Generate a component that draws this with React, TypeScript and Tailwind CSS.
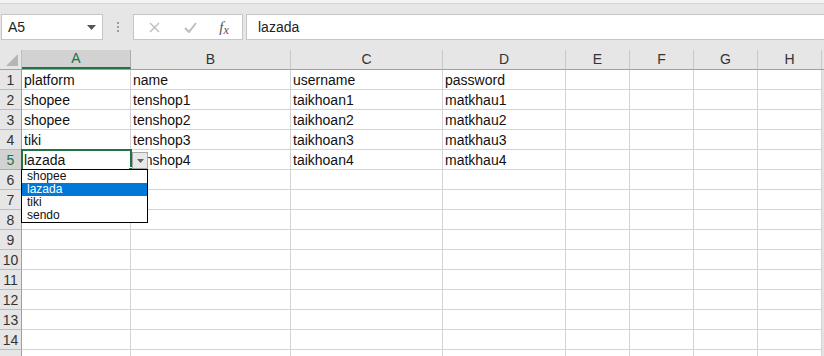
import React from 'react'

const cols = [
  { id: 'A', w: 'w-[109px]' },
  { id: 'B', w: 'w-[160px]' },
  { id: 'C', w: 'w-[152px]' },
  { id: 'D', w: 'w-[123px]' },
  { id: 'E', w: 'w-[64px]' },
  { id: 'F', w: 'w-[64px]' },
  { id: 'G', w: 'w-[64px]' },
  { id: 'H', w: 'w-[64px]' },
]

const data: string[][] = [
  ['platform', 'name', 'username', 'password'],
  ['shopee', 'tenshop1', 'taikhoan1', 'matkhau1'],
  ['shopee', 'tenshop2', 'taikhoan2', 'matkhau2'],
  ['tiki', 'tenshop3', 'taikhoan3', 'matkhau3'],
  ['lazada', 'tenshop4', 'taikhoan4', 'matkhau4'],
]

const options = ['shopee', 'lazada', 'tiki', 'sendo']

const font = { fontFamily: '"Liberation Sans", Arial, sans-serif' }

function FormulaBar() {
  return (
    <div className="h-[47px] bg-[#e6e6e6] border-t border-[#d4d4d4] flex items-start pt-[10px] pl-[1px]">
      {/* name box */}
      <div className="w-[102px] h-[26px] bg-white border border-[#c6c6c6] flex items-center pl-[6px] pr-[6px] text-[14px] text-[#222]">
        <span className="flex-1">A5</span>
        <svg width="9" height="5" viewBox="0 0 9 5"><path d="M0 0h9L4.5 5z" fill="#555" /></svg>
      </div>
      <div className="w-[30px] h-[26px] flex flex-col items-center justify-center gap-[2px]">
        <span className="w-[2px] h-[2px] bg-[#9a9a9a]" />
        <span className="w-[2px] h-[2px] bg-[#9a9a9a]" />
        <span className="w-[2px] h-[2px] bg-[#9a9a9a]" />
      </div>
      {/* cancel / enter / fx */}
      <div className="w-[110px] h-[26px] bg-white border border-[#c6c6c6] flex items-center">
        <div className="w-[36px] flex justify-center pl-[4px]">
          <svg width="11" height="11" viewBox="0 0 11 11"><path d="M1 1l9 9M10 1l-9 9" stroke="#bdbdbd" strokeWidth="1.4" /></svg>
        </div>
        <div className="w-[36px] flex justify-center pl-[4px]">
          <svg width="13" height="11" viewBox="0 0 13 11"><path d="M1 6l4 4 7-9" stroke="#bdbdbd" strokeWidth="2" fill="none" /></svg>
        </div>
        <div className="flex-1 flex justify-center items-baseline text-[#555] text-[15px] italic leading-none" style={{ fontFamily: '"Liberation Serif", serif' }}>
          f<span className="text-[12px] relative top-[2px]">x</span>
        </div>
      </div>
      <div className="flex-1 ml-[3px] h-[26px] bg-white border border-[#c6c6c6] border-r-0 flex items-center pl-[11px] text-[14px] text-[#222]">
        lazada
      </div>
    </div>
  )
}

function Grid() {
  const rows = Array.from({ length: 15 }, (_, i) => i + 1)
  return (
    <div className="relative">
      {/* column headers */}
      <div className="flex h-[20px] bg-[#e6e6e6] border-b border-[#9f9f9f]">
        <div className="w-[22px] h-full border-r border-[#bfbfbf] flex items-end justify-end pr-[3px] pb-[3px]">
          <svg width="12" height="12" viewBox="0 0 12 12"><path d="M12 0v12H0z" fill="#b5b5b5" /></svg>
        </div>
        {cols.map(c => (
          <div
            key={c.id}
            className={`${c.w} h-full flex items-center justify-center text-[14px] ${
              c.id === 'A'
                ? 'bg-[#d2d2d2] text-[#217346] border-b-2 border-[#217346] border-r border-r-[#ababab]'
                : 'text-[#333] border-r border-[#c8c8c8]'
            }`}
          >
            {c.id}
          </div>
        ))}
        <div className="flex-1 bg-[#e6e6e6]" />
      </div>
      {rows.map(r => (
        <div key={r} className="flex h-[20px]">
          <div
            className={`w-[22px] h-full border-r border-b flex items-center justify-center pt-[2px] text-[14px] ${
              r === 5 ? 'bg-[#d2d2d2] text-[#217346] border-r-[#9f9f9f] border-b-[#ababab]' : 'bg-[#e6e6e6] text-[#333] border-[#bdbdbd] border-r-[#9f9f9f]'
            }`}
          >
            {/* row 15 sits below the window edge, its number is not visible */}
            {r < 15 ? r : ''}
          </div>
          {cols.map((c, ci) => (
            <div
              key={c.id}
              className={`${c.w} h-full border-r border-b border-[#d4d4d4] flex items-center pt-[2px] pl-[2px] text-[14px] text-[#111] whitespace-nowrap overflow-hidden`}
            >
              {data[r - 1]?.[ci] ?? ''}
            </div>
          ))}
          <div className="flex-1 bg-[#e3e3e3]" />
        </div>
      ))}

      {/* active cell A5 */}
      <div className="absolute left-[21px] top-[99px] w-[111px] h-[22px] border-2 border-[#217346] pointer-events-none" />
      <div className="absolute left-[128px] top-[117px] w-[6px] h-[6px] bg-[#217346] border border-white" />

      {/* validation dropdown button */}
      <div className="absolute left-[132px] top-[102px] w-[16px] h-[17px] bg-[#e8e8e8] border border-[#a6a6a6] flex items-center justify-center">
        <svg width="7" height="4" viewBox="0 0 7 4"><path d="M0 0h7L3.5 4z" fill="#666" /></svg>
      </div>

      {/* dropdown list */}
      <div className="absolute left-[21px] top-[119px] w-[127px] bg-white border border-black text-[12px] leading-[13px]">
        {options.map(o => (
          <div
            key={o}
            className={`h-[13px] pl-[5px] ${o === 'lazada' ? 'bg-[#0078d7] text-white' : 'text-[#111]'}`}
          >
            {o}
          </div>
        ))}
      </div>
    </div>
  )
}

export default function App() {
  return (
    <div className="w-[824px] h-[356px] overflow-hidden bg-white" style={font}>
      <div className="h-[3px] bg-[#f3f3f3]" />
      <FormulaBar />
      <Grid />
    </div>
  )
}
